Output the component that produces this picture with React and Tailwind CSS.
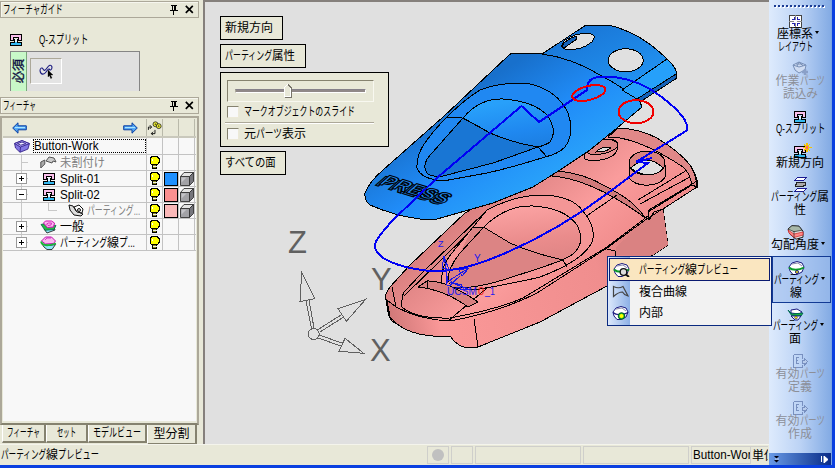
import React, { useLayoutEffect, useRef, useState } from "react";

/* Squeezes or stretches one run of text to the width of its box. */
function Fit({ children, className = "" }) {
  const ref = useRef(null);
  const [k, setK] = useState(1);
  useLayoutEffect(() => {
    const el = ref.current;
    if (el.offsetWidth) setK(el.parentElement.clientWidth / el.offsetWidth);
  }, []);
  return (
    <span className={"block shrink-0 whitespace-nowrap " + className}>
      <span ref={ref} className="inline-block origin-left" style={{ transform: `scaleX(${k})` }}>{children}</span>
    </span>
  );
}

function Pin() {
  return (
    <svg width="8" height="10" viewBox="0 0 8 10" shapeRendering="crispEdges" fill="none" stroke="#000">
      <path d="M1 .5h6M2.500 0v5M5.500 0v5M4.500 0v5M0 5.500h8M3.500 5v5" />
    </svg>
  );
}
function Close() {
  return (
    <svg width="9" height="9" viewBox="0 0 9 9" fill="none" stroke="#000" strokeWidth="1.7">
      <path d="M.8.8l7 7M7.800.8l-7 7" />
    </svg>
  );
}

function SplitIcon({ spark = false }) {
  return (
    <svg width={spark ? 18 : 12} height={spark ? 15 : 12} viewBox={spark ? "0 -3 18 15" : "0 0 12 12"} shapeRendering="crispEdges" className={"shrink-0" + (spark ? " ml-[6px]" : "")}>
      <path d="M0 0h12v7H8V4H4v3H0z" fill="#000" />
      <path d="M1 1h10v5H9V3H3v3H1z" fill="#fbc0ec" />
      <path d="M4 5h4v3h4v4H0V8h4z" fill="#000" />
      <path d="M5 6h2v3h4v2H1V9h4z" fill="#36b9f0" />
      <path d="M5 5h2v3H5z" fill="#e8f4fb" />
      {spark && <path d="M13 -3v9M8.500 1.500h9M10 -2l6 7M16 -2l-6 7" stroke="#f5c400" strokeWidth="1.2" />}
      {spark && <circle cx="13" cy="1.5" r="1.2" fill="#f66" />}
    </svg>
  );
}

function Bulb() {
  return (
    <svg width="11" height="14" viewBox="0 0 11 14" shapeRendering="crispEdges">
      <path d="M3 .5h5l2 2v4l-2 2.500h-5l-2-2.500v-4z" fill="#ff0" stroke="#000" />
      <path d="M3 3v2" stroke="#fff" />
      <path d="M3.500 8.500h4v4h-4z" fill="#8a8a20" stroke="#000" />
      <path d="M4 10.500h4" stroke="#eee" />
    </svg>
  );
}
function Cube() {
  return (
    <svg width="14" height="14" viewBox="0 0 14 14" stroke="#333" strokeWidth=".9" strokeLinejoin="round">
      <path d="M.5 4.500h9v9h-9z" fill="#a2a2a6" />
      <path d="M.5 4.500l3.500-4h9.500l-4 4z" fill="#e4e4e4" />
      <path d="M9.500 4.500l4-4v9l-4 4z" fill="#76767c" />
      <path d="M1.500 5.500h5l-5 5z" fill="#c4c4c8" stroke="none" />
    </svg>
  );
}
function Arrow({ flip }) {
  return (
    <svg width="15" height="12" viewBox="0 0 15 12" className={flip ? "-scale-x-100" : ""}>
      <path d="M.7 6L6 .8v3h8.300v4H6v3.400z" fill="#4fa4f4" stroke="#0b3ea0" />
      <path d="M3 5.600h10" stroke="#b8ecff" />
    </svg>
  );
}
function Link() {
  return (
    <svg width="16" height="16" viewBox="0 0 16 16" fill="none" stroke="#111">
      <circle cx="9" cy="4" r="2.600" fill="#ee3" strokeWidth=".8" /><circle cx="12.500" cy="6" r="2.600" fill="#ee3" strokeWidth=".8" />
      <circle cx="9" cy="4" r=".5" strokeWidth=".7" /><circle cx="12.500" cy="6" r=".5" strokeWidth=".7" />
      <path d="M1.500 10V7h3M3 5l2 2-2 2M8.500 10v4h-4M6.500 12l-2 2 2 1.500" />
    </svg>
  );
}
function Mold() {
  return (
    <svg width="16" height="13" viewBox="0 0 16 13" stroke="#33208a" strokeWidth=".9">
      <path d="M.6 3.500L8 .6l7.400 3-1.500 5.500L6 12.300 1.500 8z" fill="#8478e4" />
      <path d="M.6 3.500L8 .6l7.400 3L6.500 7z" fill="#b8b0fa" />
      <path d="M3.500 3.600L8 2l3.800 1.700-5 1.500z" fill="#eef" />
      <path d="M6.500 7L6 12" />
    </svg>
  );
}
function Pieces({ bold = false }) {
  return (
    <svg width="17" height="13" viewBox="0 0 17 13" stroke={bold ? "#111" : "#555"} fill={bold ? "#ddd" : "#aaa"}>
      {bold ? (
        <><path d="M1 1l4 1 3 5 7 3-2 2-7-1-4-5z" /><path d="M6 3l5-2 4 4-1 4-5-1z" fill="#fff" /><circle cx="11" cy="6" r="1.500" /></>
      ) : (
        <><path d="M.8 6l4-2v4l-4 4z" /><path d="M6 5l3-4 5 1 2 4-3-1-1 2z" fill="#ccc" /></>
      )}
    </svg>
  );
}
function Parting({ kind = "line", w = 17 }) {
  return (
    <svg width={w} height="14" viewBox="0 0 17 14" strokeWidth="1">
      {kind === "general" && (
        <><path d="M4 9l10-2 1 3-8 3z" fill="#8fe8f8" stroke="#111" strokeWidth=".8" /><path d="M1 4.500l4-1 11 2-2 4-9 .8z" fill="#28b848" stroke="#064" strokeWidth=".8" /><path d="M3.500 3l2-2h6l3 2-1 4-6 .5z" fill="#fbb8f0" stroke="#d010b0" /><path d="M6.500 4l2-1h3l-.5 2-3 .500z" fill="none" stroke="#d010b0" strokeWidth=".8" /></>
      )}
      {kind === "curve" && (
        <><path d="M2 8l2 3 3 2.500h5l3.500-5-6 1z" fill="#8fe8f8" stroke="#111" strokeWidth=".8" /><path d="M1.500 5l4-4h6l4 4-2 2.500-8 .5z" fill="#fbb8f0" stroke="#c010b0" /><path d="M5 4l2-2h4" fill="none" stroke="#c010b0" strokeWidth=".7" /><path d="M1 5.500c1 4 6 5 15 2" fill="none" stroke="#18b838" strokeWidth="1.800" /></>
      )}
      {(kind === "line" || kind === "view" || kind === "inner") && (
        <>
          <path d="M1 6l3-4 5-1.500 5 1.500 2 4-2 5-5 2.500h-4L2 10z" fill="#fff" stroke="#1a1a80" />
          <path d="M4 3l6-1 4 3" fill="none" stroke="#88a" />
          <path d="M1 6.500c3 3 10 3 15 0" fill="none" stroke={kind === "inner" ? "#1a1a80" : "#0a9a2a"} strokeWidth={kind === "inner" ? 1.2 : 2} />
          {kind === "line" && <circle cx="9" cy="11" r="1.500" fill="#fe0" stroke="#1a1a80" />}
          {kind === "inner" && <><circle cx="9.500" cy="10" r="3.300" fill="#2b2" stroke="#053" /><circle cx="9.500" cy="10" r="2" fill="#ff0" /></>}
          {kind === "view" && <><circle cx="10.500" cy="9" r="3.300" fill="#ddd" stroke="#111" strokeWidth="1.300" /><path d="M13 11.500l3 2.500" stroke="#111" strokeWidth="2" /></>}
        </>
      )}
      {kind === "face" && (
        <><path d="M4 3l6-1 5 3-3 2-8-1z" fill="#fff" stroke="#1a1a80" /><path d="M1 3l4 4 11-1-2 3H5z" fill="#18b838" stroke="#065" /><path d="M4 9l4 4h3l3-4z" fill="#fff" stroke="#1a1a80" /><circle cx="9" cy="10.500" r="1.400" fill="#fe0" stroke="#1a1a80" strokeWidth=".6" /></>
      )}
    </svg>
  );
}

function PaneHeader({ title, w }) {
  return (
    <div className="flex h-[17px] w-[199px] shrink-0 items-center border border-[#aca899] pl-[2px] pr-[4px] shadow-[inset_1px_1px_0_#f6f6ee]">
      <Fit className={w}>{title}</Fit>
      <span className="ml-auto mr-[7px]"><Pin /></span>
      <Close />
    </div>
  );
}

function TreeRow({ expander, indent, icon, label, w, muted, swatch, bulb = true, first }) {
  return (
    <div className={"flex shrink-0 border-b border-[#c3c3c3] " + (first ? "h-[17px]" : "h-[16px]")}>
      <div className="flex w-[144px] shrink-0 items-center border-r border-[#c3c3c3]">
        {first ? null : (
          <span className="flex w-[25px] shrink-0 items-center pl-[13px]">
            {expander ? (
              <svg width="12" height="15" viewBox="0 0 12 15" shapeRendering="crispEdges" fill="none">
                <path d="M5.500 0v15M10 7.500h2" stroke="#c8c8c8" />
                <path d="M.5 2.500h10v10H.5z" fill="#fff" stroke="#999" />
                <path d={expander === "+" ? "M3 7.500h5M5.500 5v5" : "M3 7.500h5"} stroke="#000" />
              </svg>
            ) : (
              <svg width="12" height="15" viewBox="0 0 12 15" shapeRendering="crispEdges" fill="none" stroke="#c8c8c8">
                <path d={muted === "child" ? "M5.500 0v15" : "M5.500 0v15M6 7.500h8"} />
              </svg>
            )}
          </span>
        )}
        {muted === "child" && (
          <svg width="20" height="15" viewBox="0 0 20 15" shapeRendering="crispEdges" className="ml-[9px] -mr-[9px] shrink-0" fill="none" stroke="#c8c8c8"><path d="M20 7.500h-9V0" /></svg>
        )}
        <span className={"flex shrink-0 items-center " + indent}>{icon}</span>
        {first ? (
          <span className="flex h-[14px] w-[113px] items-center border border-dotted border-black"><Fit className={w}>{label}</Fit></span>
        ) : (
          <span className={"flex items-center " + (muted ? "text-[#808080]" : "")}>
            {Array.isArray(label) ? label.map(([t, c]) => <Fit key={t} className={c}>{t}</Fit>) : <Fit className={w}>{label}</Fit>}
          </span>
        )}
      </div>
      <div className="flex w-[16px] shrink-0 items-center justify-center border-r border-[#c3c3c3]">{bulb && <Bulb />}</div>
      <div className="flex w-[16px] shrink-0 items-center justify-center border-r border-[#c3c3c3]">{swatch && <span className={"h-[14px] w-[14px] border border-black " + swatch} />}</div>
      <div className="flex w-[16px] shrink-0 items-center justify-center border-r border-[#c3c3c3]">{swatch && <Cube />}</div>
    </div>
  );
}

function LeftPanel() {
  return (
    <div className="flex w-[203px] shrink-0 flex-col pt-px">
      <PaneHeader title="フィーチャガイド" w="w-[60px]" />
      <div className="flex h-[79px] w-[199px] shrink-0 flex-col pl-[10px] pt-[14px]">
        <div className="flex h-[16px] items-center">
          <SplitIcon />
          <Fit className="ml-[17px] w-[49px]">Q-スプリット</Fit>
        </div>
        <div className="mt-[3px] flex h-[40px] w-[130px] border border-b-0 border-[#858585] bg-[#e0e0e0]">
          <div className="flex w-[16px] items-center justify-center border-r border-[#7aa77a] bg-[#c8f8c8]">
            <span className="w-[12px] rotate-180 text-[12px] leading-[12px] text-[#101040] [text-orientation:sideways] [writing-mode:vertical-rl] [-webkit-text-stroke:0.4px_#101040]">必須</span>
          </div>
          <div className="ml-[3px] mt-[6px] flex h-[26px] w-[32px] items-center justify-center border border-b-white border-l-[#aca899] border-r-white border-t-[#aca899] bg-[#e4e4e4]">
            <svg width="15" height="15" viewBox="0 0 15 15" fill="none" stroke="#1a1a80" strokeWidth="1.100">
              <path d="M1 7c0-3 2-4 3-2s2 2 4-1 4-4 5-1c0 3-2 4-3 2M1 7c1 4 4 4 6 1s3-4 4-2" />
              <path d="M9 6l5 5-2.500 0 1.500 3-1.300.5-1.200-3L9 13z" fill="#000" stroke="#000" strokeWidth=".3" />
            </svg>
          </div>
        </div>
      </div>
      <PaneHeader title="フィーチャ" w="w-[33px]" />
      <div className="mt-[2px] flex h-[309px] w-[199px] shrink-0 flex-col border-2 border-b-[#85826f] border-l-[#aca899] border-r-[#aca899] border-t-[#aca899] pb-[2px] pl-px pr-px pt-px">
        <div className="flex h-full w-[193px] flex-col overflow-hidden bg-[#f8f8f8]">
          <div className="flex h-[19px] shrink-0 border-b-2 border-[#c9c8bc] bg-[#e8e8d8]">
            <div className="flex w-[144px] items-center justify-between border-r border-[#b9b9aa] pl-[9px] pr-[8px]"><Arrow /><Arrow flip /></div>
            <div className="flex w-[16px] items-center border-r border-[#b9b9aa]"><Link /></div>
            <div className="w-[16px] border-r border-[#b9b9aa]" />
            <div className="w-[16px] border-r border-[#b9b9aa]" />
          </div>
          <TreeRow first bulb={false} indent="w-[30px] pl-[11px]" icon={<Mold />} label="Button-Work" w="w-[64px]" />
          <TreeRow muted="root" indent="ml-[12px] w-[20px]" icon={<Pieces />} label="未割付け" w="w-[45px]" />
          <TreeRow expander="+" indent="ml-[15px] w-[17px]" icon={<SplitIcon />} label="Split-01" w="w-[40px]" swatch="bg-[#1e90ff]" />
          <TreeRow expander="-" indent="ml-[15px] w-[17px]" icon={<SplitIcon />} label="Split-02" w="w-[40px]" swatch="bg-[#fa9090]" />
          <TreeRow muted="child" indent="w-[39px] pl-[20px]" icon={<Pieces bold />} label="パーティング..." w="w-[53px]" swatch="bg-[#fab8b8]" />
          <TreeRow expander="+" indent="ml-[12px] w-[20px]" icon={<Parting kind="general" />} label="一般" w="w-[24px]" />
          <TreeRow expander="+" indent="ml-[12px] w-[20px]" icon={<Parting kind="curve" />} label={[["パーティング", "w-[47px]"], ["線", "w-[12px]"], ["プ...", "w-[16px]"]]} />
        </div>
      </div>
      <div className="flex h-[20px] w-[199px] shrink-0 items-start pl-[2px]">
        {[["フィーチャ", "w-[44px]", "w-[33px]"], ["セット", "w-[42px]", "w-[19px]"], ["モデルビュー", "w-[59px]", "w-[48px]"]].map(([t, a, b]) => (
          <div key={t} className={"flex h-[18px] items-center justify-center border-b-2 border-l border-r-2 border-b-[#85826f] border-l-white border-r-[#85826f] " + a}><Fit className={b}>{t}</Fit></div>
        ))}
        <div className="flex h-[20px] w-[50px] items-center justify-center border-b-2 border-l border-r-2 border-b-[#85826f] border-l-white border-r-[#85826f]"><Fit className="w-[36px]">型分割</Fit></div>
      </div>
    </div>
  );
}

function Model() {
  return (
    <svg className="absolute inset-0" width="564" height="442" viewBox="205 2 564 442" fill="none" shapeRendering="crispEdges">
      <defs>
        <linearGradient id="b1" gradientUnits="userSpaceOnUse" x1="440" y1="110" x2="500" y2="205">
          <stop offset="0" stopColor="#1870cc" /><stop offset=".55" stopColor="#208cf8" /><stop offset="1" stopColor="#28a0fa" />
        </linearGradient>
        <linearGradient id="b2" gradientUnits="userSpaceOnUse" x1="560" y1="40" x2="600" y2="130">
          <stop offset="0" stopColor="#1a78d8" /><stop offset="1" stopColor="#249cfa" />
        </linearGradient>
        <linearGradient id="b3" gradientUnits="userSpaceOnUse" x1="490" y1="105" x2="500" y2="165">
          <stop offset="0" stopColor="#28a0fa" /><stop offset=".5" stopColor="#1f88f0" /><stop offset="1" stopColor="#1a78d8" />
        </linearGradient>
        <linearGradient id="p1" gradientUnits="userSpaceOnUse" x1="450" y1="220" x2="540" y2="320">
          <stop offset="0" stopColor="#d87e7e" /><stop offset=".6" stopColor="#fa9c9c" /><stop offset="1" stopColor="#f08c8c" />
        </linearGradient>
        <linearGradient id="p2" gradientUnits="userSpaceOnUse" x1="390" y1="320" x2="650" y2="260">
          <stop offset="0" stopColor="#d07878" /><stop offset=".18" stopColor="#fa9898" /><stop offset=".8" stopColor="#f08e8e" /><stop offset="1" stopColor="#d88080" />
        </linearGradient>
        <linearGradient id="p3" gradientUnits="userSpaceOnUse" x1="510" y1="205" x2="520" y2="280">
          <stop offset="0" stopColor="#fca4a4" /><stop offset=".5" stopColor="#ea8c8c" /><stop offset="1" stopColor="#d88080" />
        </linearGradient>
      </defs>

      {/* lower, pink half */}
      <g stroke="#000">
        <path d="M465 213L410 265 390 287Q384 295 386 300L388 312Q390 321 395 323 413 334 433 336H450Q458 348 470 348L478 347 540 322 607 286 668 245 663 209 697 187V180Q694 170 690 165 680 152 657 138 640 129 618 128L540 170z" fill="url(#p1)" />
        <path d="M387 300L396 307Q420 320 450 321 500 312 537 293L607 248 648 218 663 209 668 245 607 286 540 322 478 347 470 348Q458 348 450 336H433Q404 334 390 317z" fill="url(#p2)" />
        <path d="M615 255L616 247 648 219 663 209 668 245 653 255z" fill="#da8282" stroke="none" />
        <path d="M402 307Q401 294 406 290L420 275 487 210M404 296L480 222M392 287L396 307M402 307Q415 319 450 318 495 310 523 298L607 247 648 216" />
        <path d="M618 128Q640 129 657 138 680 152 690 165 697 177 697 187L692 185Q690 173 683 167 647 143 620 138L608 137z" fill="#e08888" />
        <path d="M555 171Q582 172 607 187 636 202 645 218L640 214Q590 179 552 176z" fill="#d07a7a" />
        <path d="M687 170L638 200M690 177L640 204M692 185L648 212M697 181L649 210 648 220M649 220L654 212 663 209M617 195L585 217M474 319L478 347M448 321L493 283M607 249l8 2 1 6" />
        <path d="M442 283Q440 267 452 253L487 210Q515 195 543 195 572 196 583 211 597 228 592 242 583 261 540 277 520 282 480 289 450 291 442 283z" fill="#f49696" />
        <path d="M448 280Q448 268 460 253L483 228Q505 205 533 206 565 208 577 225 586 243 573 254 565 260 540 268L503 280Q470 290 452 287z" fill="url(#p3)" />
        <path d="M473 227L485 228Q500 237 510 243 532 253 563 260L540 268 503 280Q470 290 452 287L448 280Q448 268 460 253z" fill="#dc8484" stroke="none" />
        <path d="M473 227L485 228Q500 237 510 243 532 253 563 260L567 267M448 280Q448 268 460 253L483 228M452 287Q470 290 503 280L540 268 563 260" />
        <path d="M418 287L427 281Q446 280 478 302L468 307Q445 290 418 287zM427 281v7" fill="#d88080" />
        <path d="M584 150v8c3 5 30 3 33-8v-8c-4-6-31-1-33 8z" fill="#e89090" />
        <ellipse cx="601" cy="147" rx="17" ry="7" transform="rotate(-10 601 147)" fill="#dc8484" />
        <path d="M596 152q7 -7 15 -4 q-5 4 -15 4z" fill="#ddd" />
        <path d="M629 165v12c5 11 30 11 36 0v-12z" fill="#e89090" />
        <ellipse cx="647" cy="163" rx="18" ry="12" fill="#da8080" />
        <path d="M631 168Q647 152 663 168 661 173 650 175 637 174 631 168z" fill="#e0e0e0" />
      </g>

      {/* upper, blue half */}
      <g stroke="#000">
        <path d="M512 53H525L542 54 586 25H608Q640 32 667 59 677 68 677 77L640 102 642 107 617 128 590 150 560 170 533 187 493 203 437 219H420Q395 216 370 205 364 200 365 193 369 182 383 170L443 117 508 56z" fill="url(#b1)" />
        <path d="M542 54L586 25H608Q640 32 667 59 677 68 677 77L640 102Q620 85 600 75 572 58 542 54z" fill="url(#b2)" />
        <path d="M622 90L667 59Q677 68 677 75L637 99z" fill="#26a0fa" />
        <path d="M637 99L676 74 677 78 640 102z" fill="#1462b8" />
        <path d="M417 168Q416 154 427 140 435 129 447 117 465 99 480 90 504 81 530 84 557 90 568 113 575 133 565 147 558 154 545 157 510 168 487 173L443 181Q421 179 417 168z" fill="#2088f2" />
        <path d="M425 168Q424 161 432 153L463 118Q480 98 503 99 533 101 547 115 558 131 550 142 546 145 538 147L493 163 443 176Q426 178 425 168z" fill="url(#b3)" />
        <path d="M463 118L490 133Q513 143 538 147L493 163 443 176Q426 178 425 168 424 161 432 153z" fill="#1976d4" />
        <path d="M447 117H460Q475 124 490 133 513 143 538 147L547 157" />
        <ellipse cx="578" cy="41.500" rx="17" ry="7" transform="rotate(-17 578 41.500)" fill="#e0e0e0" />
        <path d="M562 46Q565 40 576 36L577 39 564 48z" fill="#1462b8" />
        <ellipse cx="625.700" cy="60.300" rx="17.500" ry="11.500" fill="#e0e0e0" />
      </g>
      <g transform="translate(378 184) rotate(17) skewX(-32)" fontFamily="Liberation Sans" fontWeight="700" fontSize="17" stroke="#000" strokeWidth="1" shapeRendering="crispEdges">
        <text x="-2" y="2" textLength="69" lengthAdjust="spacingAndGlyphs" fill="#1462b8">PRESS</text>
        <text x="0" y="0" textLength="69" lengthAdjust="spacingAndGlyphs" fill="#1e86f0">PRESS</text>
      </g>

      {/* parting line and hole loops */}
      <path d="M521.500 106L539 122 587 90Q587 77 600 77 625 75 650 89 672 103 683 117 690 129 686 131L636 162 652 158 638 162 648 163 608 193Q545 240 480 263 453 272 430 271 400 268 383 258 370 248 378 238 383 231 393 220L438 177z" stroke="#0000f4" strokeWidth="2" />
      <g stroke="#f00000" strokeWidth="2">
        <ellipse cx="588.700" cy="93" rx="17" ry="7" transform="rotate(-14 588.700 93)" />
        <ellipse cx="636" cy="111.700" rx="17.500" ry="11.500" />
      </g>

      {/* local coordinate system */}
      <g stroke="#1818e8">
        <path d="M448 283L444 256 442 268 449 270 444 256M446 268l1 14M451 284L460 276M450 280L469 268 459 270 462 276 469 268M450 282l20 8-10-1 2 -4z" />
        <circle cx="449" cy="283" r="2.500" />
      </g>
      <g fontFamily="Liberation Sans" fill="#1818f0">
        <text x="438" y="247" fontSize="9">Z</text>
        <text x="474" y="262" fontSize="10">Y</text>
        <text x="447" y="295" fontSize="11" textLength="30" lengthAdjust="spacingAndGlyphs">UCSM</text>
        <text x="478" y="295" fill="#f02020" fontSize="11">0</text>
        <text x="485" y="295" fontSize="11" textLength="10" lengthAdjust="spacingAndGlyphs">_1</text>
      </g>

      {/* view orientation triad */}
      <g stroke="#606060">
        <circle cx="313.700" cy="334" r="5.500" />
        <path d="M311.500 328L306 301M314 328L309 300M301.700 272.300L300 301.700 314.700 298.700zM318 329.500L341 315M320 332L343 317.500M365.700 299.300L338 308.700 346.300 321.300zM319 335L342 343M318 338L341 346M363.700 353.300L345 338.300 339 351.300z" />
      </g>
      <g fontFamily="Liberation Sans" fontSize="31" fill="#606060">
        <text x="288" y="253">Z</text>
        <text x="371" y="290">Y</text>
        <text x="370" y="361">X</text>
      </g>
    </svg>
  );
}

const box = "flex items-center border border-black bg-[#e8e8d8] pl-[4px]";

function Check() {
  return <span className="h-[12px] w-[12px] shrink-0 border border-b-[#ece9d8] border-l-[#85826f] border-r-[#ece9d8] border-t-[#85826f] bg-[#f8f8f8]" />;
}

function Viewport() {
  return (
    <div className="relative flex-1 overflow-hidden border-l-2 border-t-2 border-l-[#85807c] border-t-[#85807c] bg-[#e0e0e0]">
      <Model />
      <div className="relative flex flex-col items-start gap-[4px] pl-[15px] pt-[14px]">
        <div className={box + " h-[24px] w-[63px]"}><Fit className="w-[48px]">新規方向</Fit></div>
        <div className={box + " h-[24px] w-[86px]"}><Fit className="w-[47px]">パーティング</Fit><Fit className="w-[23px]">属性</Fit></div>
        <div className="flex h-[75px] w-[169px] flex-col border border-black bg-[#e8e8d8] pl-[4px] pt-[7px]">
          <div className="ml-[2px] flex h-[22px] w-[147px] items-center border border-b-[#f8f8f0] border-l-[#85826f] border-r-[#f8f8f0] border-t-[#85826f] pl-[7px]">
            <div className="relative h-[4px] w-[131px] border border-b-white border-l-[#aca899] border-r-white border-t-[#85808a] bg-[#908888]">
              <svg className="absolute -top-[6px] left-[48px]" width="8" height="14" viewBox="0 0 8 14" shapeRendering="crispEdges"><path d="M.5 12.500v-9l3-3 3 3v9z" fill="#e8e8d8" stroke="#fff" /><path d="M4 .5l3 3v9.500H1" fill="none" stroke="#77746a" /></svg>
            </div>
          </div>
          <div className="ml-[2px] mt-[2px] flex h-[16px] items-center"><Check /><Fit className="ml-[5px] w-[111px]">マークオブジェクトのスライド</Fit></div>
          <div className="mt-[2px] h-[2px] w-[149px] shrink-0 border-b border-t border-b-white border-t-[#aca899]" />
          <div className="ml-[2px] mt-[2px] flex h-[16px] items-center"><Check /><Fit className="ml-[5px] w-[12px]">元</Fit><Fit className="w-[26px]">パーツ</Fit><Fit className="w-[24px]">表示</Fit></div>
        </div>
        <div className={box + " h-[24px] w-[66px]"}><Fit className="w-[51px]">すべての面</Fit></div>
      </div>
    </div>
  );
}

function StatusBar() {
  const c = "flex h-[18px] shrink-0 items-center border border-[#cfcfcb]";
  return (
    <div className="flex h-[21px] shrink-0 items-start overflow-hidden border-t border-[#f4f4ec] pt-px">
      <div className="flex h-[18px] w-[427px] shrink-0 items-center pl-px"><Fit className="w-[45px]">パーティング</Fit><Fit className="w-[12px]">線</Fit><Fit className="w-[41px]">プレビュー</Fit></div>
      <div className="flex gap-[2px]">
        <div className={c + " w-[22px] justify-center"}><span className="h-[12px] w-[12px] rounded-full bg-[#c0c0c0]" /></div>
        <div className={c + " w-[22px]"} />
        <div className={c + " w-[106px]"} />
        <div className={c + " w-[106px]"} />
        <div className={c + " w-[60px] overflow-hidden pl-px"}><Fit className="w-[64px]">Button-Work</Fit></div>
      </div>
      <div className="flex h-[18px] w-[17px] items-center overflow-hidden border-t border-[#cfcfcb] pl-px"><Fit className="w-[24px]">単位</Fit></div>
    </div>
  );
}

function CsysIcon() {
  return <svg width="13" height="13" viewBox="0 0 13 13" shapeRendering="crispEdges" fill="none"><path d="M.5.500h12v12H.5z" fill="#fff" stroke="#444" /><path d="M3 4.500h2V2M8.500 2v2.500H11M3 8.500h2V11M8.500 11V8.500H11" stroke="#2222b0" /><path d="M6.500 0v5M6.500 8v5M0 6.500h5M8 6.500h5" stroke="#888" /></svg>;
}
function LoadIcon() {
  return <svg width="17" height="15" viewBox="0 0 17 15" stroke="#7890b8"><path d="M1 4l6-3 7 3-1 5-6 3-4-3z" fill="#cfdcf2" /><path d="M1 4l6 2 7-2M7 1l-2 4M7 1l4 4M4 3h7" fill="none" /><path d="M13 8v6M10 11h6" stroke="#8aa0c8" strokeWidth="2.500" /></svg>;
}
function AttrIcon() {
  return <svg width="13" height="15" viewBox="0 0 13 15" shapeRendering="crispEdges"><path d="M3.500 .5h9l-3 3h-9z" fill="#fff" stroke="#1a1a90" /><path d="M2 5h10v4h-2v1H1V7h1z" fill="#222" /><path d="M3 6h8v2H9v1H2V8h1z" fill="#aaa" /><path d="M.5 14.500h9l3-3h-9z" fill="#fff" stroke="#1a1a90" /></svg>;
}
function DraftIcon() {
  return <svg width="17" height="15" viewBox="0 0 17 15" stroke="#111" strokeWidth=".9"><path d="M1 4l4-3.300 7 .5 4 5v6l-7 2-6-5z" fill="#ddd" /><path d="M1 4l4-3.300 7 .5 3 4-8 1.500z" fill="#a8b8a8" strokeWidth=".6" /><path d="M1 5l6 4 9-2v3l-9 2.500L2 8z" fill="#f88" stroke="#c22" strokeWidth=".7" /><path d="M7 6v8" strokeWidth=".6" /></svg>;
}
function PartIcon() {
  return <svg width="15" height="15" viewBox="0 0 15 15" shapeRendering="crispEdges" fill="none" stroke="#7890c0"><path d="M.5.500h9v4M.5.500v13h9v-3" strokeWidth="1.400" /><path d="M3 3.500h3M3 6.500h2M3 9.500h3M3 3v7" /><path d="M9.500 9.500v-3h2v-2l3 3-3 4v-2z" fill="#b8ccec" /></svg>;
}

const P6 = [["パーティング", "w-[45px]"]];
const tools = [
  { h: "h-[47px]", icon: <CsysIcon />, caret: true, lines: [[["座標系", "w-[36px]"]], [["レイアウト", "w-[35px]"]]] },
  { h: "h-[48px]", icon: <LoadIcon />, off: true, lines: [[["作業", "w-[24px]"], ["パーツ", "w-[25px]"]], [["読込み", "w-[35px]"]]] },
  { h: "h-[34px]", icon: <SplitIcon />, lines: [[["Q-スプリット", "w-[49px]"]]] },
  { h: "h-[34px]", icon: <SplitIcon spark />, lines: [[["新規方向", "w-[48px]"]]] },
  { h: "h-[48px]", icon: <AttrIcon />, lines: [[["パーティング", "w-[46px]"], ["属", "w-[12px]"]], [["性", "w-[12px]"]]] },
  { h: "h-[34px]", icon: <DraftIcon />, caret: true, lines: [[["勾配角度", "w-[48px]"]]] },
  { h: "h-[47px]", icon: <Parting />, caret: true, on: true, lines: [P6, [["線", "w-[12px]"]]] },
  { h: "h-[48px]", icon: <Parting kind="face" />, caret: true, lines: [P6, [["面", "w-[12px]"]]] },
  { h: "h-[47px]", icon: <PartIcon />, off: true, lines: [[["有効", "w-[24px]"], ["パーツ", "w-[25px]"]], [["定義", "w-[24px]"]]] },
  { h: "h-[47px]", icon: <PartIcon />, off: true, lines: [[["有効", "w-[24px]"], ["パーツ", "w-[25px]"]], [["作成", "w-[24px]"]]] },
];

function Toolbar() {
  return (
    <div className="flex w-[66px] shrink-0 border-r-[3px] border-[#0a3fe0] bg-[#7ba2e0]">
      <div className="flex w-[62px] flex-col rounded-tr-[3px] bg-gradient-to-r from-[#deebfd] via-[#bcd3f5] to-[#83abe4]">
        <div className="flex h-[14px] shrink-0 gap-[2px] pl-[5px] pt-[5px]">
          {Array.from({ length: 13 }, (_, i) => <span key={i} className="h-[2px] w-[2px] bg-[#1c3c94] shadow-[1px_1px_0_#fff]" />)}
        </div>
        {tools.map((t, i) => (
          <div key={i} className={"flex shrink-0 flex-col items-center " + t.h + (t.off ? " text-[#8c8f98]" : "") + (t.on ? " -mt-[3px] mb-[3px] ml-[3px] border border-[#123a94] bg-[#9dbdec]/60 pr-[11px] pt-[4px]" : t.caret ? " pr-[10px] pt-[1px]" : " pt-[1px]")}>
            <span className="flex h-[13px] items-center">{t.icon}</span>
            {t.lines.map((l, j) => (
              <span key={j} className="relative flex h-[12.500px] items-center">
                {l.map(([s, w]) => <Fit key={s} className={w}>{s}</Fit>)}
                {t.caret && j === 0 && <span className="absolute -right-[6px] top-[3px] border-x-[2.500px] border-t-[3px] border-x-transparent border-t-black" />}
              </span>
            ))}
          </div>
        ))}
        <div className="mt-auto flex h-[12px] shrink-0 items-center justify-between bg-gradient-to-r from-[#6a9ae6] to-[#0a2a88] pl-[5px] pr-[3px]">
          <svg width="5" height="7" viewBox="0 0 5 7"><path d="M0 0h5L2.500 2.500zM0 4h5L2.500 6.500z" fill="#001" /><path d="M1 3h4" stroke="#fff" strokeWidth=".7" /></svg>
          <svg width="7" height="7" viewBox="0 0 7 7"><path d="M.5 0v6M3 0l4 3.500-4 3.500z" fill="#fff" stroke="#fff" /></svg>
        </div>
      </div>
    </div>
  );
}

function Popup() {
  const iconCell = "flex w-[22px] shrink-0 items-center justify-center self-stretch";
  return (
    <div className="absolute left-[607px] top-[256px] flex h-[70px] w-[165px] flex-col border border-[#0a2a80] bg-[linear-gradient(to_right,#dce8fb_0,#8db0e6_22px,#f2f2f2_22px)] p-px">
      <div className="flex h-[23px] shrink-0 items-center border border-[#0a1a70] bg-[#fae6c0]">
        <span className={iconCell}><Parting kind="view" /></span>
        <Fit className="ml-[7px] w-[46px]">パーティング</Fit><Fit className="w-[12px]">線</Fit><Fit className="w-[41px]">プレビュー</Fit>
      </div>
      <div className="flex h-[21px] shrink-0 items-center">
        <span className={iconCell}>
          <svg width="17" height="13" viewBox="0 0 17 13" fill="none">
            <path d="M1.500 11.500V1.500q5 2.500 9.500 0l5 9.500q-4-1-5.500-4-4 0-9 4.500z" stroke="#444" strokeWidth="1.200" />
          </svg>
        </span>
        <Fit className="ml-[8px] w-[48px]">複合曲線</Fit>
      </div>
      <div className="flex h-[22px] shrink-0 items-center">
        <span className={iconCell}><Parting kind="inner" /></span>
        <Fit className="ml-[8px] w-[24px]">内部</Fit>
      </div>
    </div>
  );
}

export default function App() {
  return (
    <div className="relative flex h-[468px] w-[835px] flex-col overflow-hidden bg-[#e8e8d8] font-['Liberation_Sans','Noto_Sans_CJK_JP',sans-serif] text-[12px] leading-[14px] text-black">
      <div className="flex h-[465px] shrink-0">
        <div className="flex w-[769px] shrink-0 flex-col">
          <div className="flex h-[444px] shrink-0">
            <LeftPanel />
            <Viewport />
          </div>
          <StatusBar />
        </div>
        <Toolbar />
      </div>
      <div className="h-[3px] shrink-0 bg-[#0a3fe0]" />
      <Popup />
    </div>
  );
}
